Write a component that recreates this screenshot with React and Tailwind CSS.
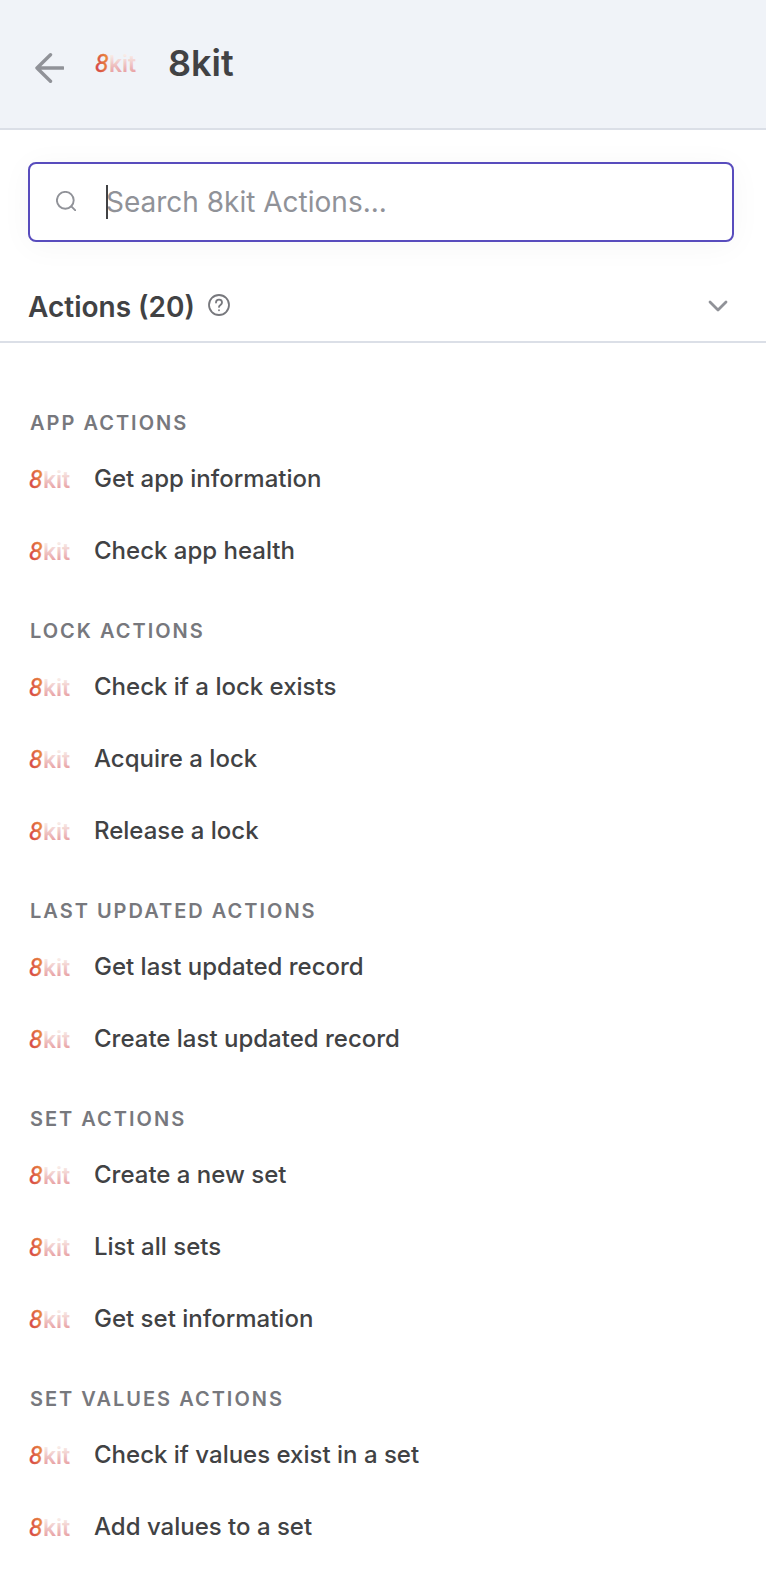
import { useId } from "react";

const groups = [
  { title: "App Actions", items: ["Get app information", "Check app health"] },
  { title: "Lock Actions", items: ["Check if a lock exists", "Acquire a lock", "Release a lock"] },
  { title: "Last Updated Actions", items: ["Get last updated record", "Create last updated record"] },
  { title: "Set Actions", items: ["Create a new set", "List all sets", "Get set information"] },
  { title: "Set Values Actions", items: ["Check if values exist in a set", "Add values to a set"] },
];

function Logo() {
  const id = useId();
  return (
    <svg viewBox="0 0 40 24" className="h-6 w-10 shrink-0 overflow-visible" aria-hidden="true">
      <defs>
        <linearGradient id={`${id}a`} x1="0" y1="0.7" x2="1" y2="0.3">
          <stop offset="0.1" stopColor="#d6484a" />
          <stop offset="0.9" stopColor="#ea8a3c" />
        </linearGradient>
        <linearGradient id={`${id}b`} gradientUnits="userSpaceOnUse" x1="0" y1="4" x2="0" y2="21">
          <stop offset="0" stopColor="#f8ece8" />
          <stop offset="1" stopColor="#e8a3a6" />
        </linearGradient>
      </defs>
      <text x="-1" y="20.5" fill={`url(#${id}a)`} stroke={`url(#${id}a)`} strokeWidth="0.3" className="font-['Roboto',sans-serif] text-[25px] italic">8</text>
      <text x="13" y="20.5" fill={`url(#${id}b)`} className="font-['Inter',sans-serif] text-[23px] font-semibold">kit</text>
    </svg>
  );
}

export default function App() {
  return (
    <div className="bg-white font-['Inter',sans-serif] text-[#414244]">
      <header className="flex h-[130px] items-center border-b-2 border-[#dbdfe7] bg-[#f0f3f8] pb-0.5 pl-[34px]">
        <button type="button" aria-label="Back" className="mt-2.5 mr-8 text-[#909298]">
          <svg viewBox="0 0 30 30" className="size-[30px]" fill="none" stroke="currentColor" strokeWidth="3.4" strokeLinecap="round" strokeLinejoin="round">
            <path d="M16.5 1.8 3 15l13.5 13.2M3 15h26" />
          </svg>
        </button>
        <Logo />
        <h1 className="ml-8 text-[36px] leading-10 font-semibold">8kit</h1>
      </header>

      <div className="px-7 pt-8 pr-8">
        <label className="flex h-20 items-center rounded-lg border-2 border-[#584cbd] bg-white pl-[26px] shadow-[0_4px_32px_rgba(0,0,0,0.04)]">
          <svg viewBox="0 0 20 20" className="mb-0.5 size-5 shrink-0 text-[#909298]" fill="none" stroke="currentColor" strokeWidth="1.9" strokeLinecap="round">
            <circle cx="9.3" cy="9.3" r="8.4" />
            <path d="m15.3 15.3 4.2 4.2" />
          </svg>
          <span className="relative ml-[30px] flex flex-1 items-center">
            <span className="absolute left-0 h-[34px] w-0.5 bg-[#414244]" />
            <input type="text" aria-label="Search 8kit Actions" placeholder="Search 8kit Actions..." className="w-full bg-transparent text-[28px] leading-9 outline-none placeholder:text-[#909298]" />
          </span>
        </label>
      </div>

      <button type="button" aria-expanded="true" className="mt-6 flex h-[77px] w-full items-center border-b-2 border-[#dbdfe7] pt-1.5 pr-[38px] pl-7 text-left">
        <span className="text-[28px] leading-9 font-semibold">Actions (20)</span>
        <svg viewBox="0 0 22 22" className="mb-1 ml-[13px] size-[22px] text-[#77787d]" fill="none" stroke="currentColor" strokeWidth="1.8" strokeLinecap="round" strokeLinejoin="round">
          <circle cx="11" cy="11" r="10" />
          <path d="M8 8.5a3 3 0 0 1 6 .3c0 2-3 2.2-3 4.1M11 16.2v.1" />
        </svg>
        <svg viewBox="0 0 20 12" className="mb-0.5 ml-auto h-3 w-5 text-[#909298]" fill="none" stroke="currentColor" strokeWidth="2.8" strokeLinecap="round" strokeLinejoin="round">
          <path d="m2 2 8 8 8-8" />
        </svg>
      </button>

      <main className="pt-9">
        {groups.map((group) => (
          <section key={group.title}>
            <h2 className="flex h-16 items-end pb-2 pl-[30px] text-[20px] leading-6 font-semibold tracking-[2px] text-[#77787d] uppercase">{group.title}</h2>
            <ul>
              {group.items.map((item) => (
                <li key={item}>
                  <button type="button" className="flex h-[72px] w-full items-center pl-[30px] text-left">
                    <Logo />
                    <span className="ml-6 text-[24px] leading-8 font-medium">{item}</span>
                  </button>
                </li>
              ))}
            </ul>
          </section>
        ))}
      </main>
    </div>
  );
}
